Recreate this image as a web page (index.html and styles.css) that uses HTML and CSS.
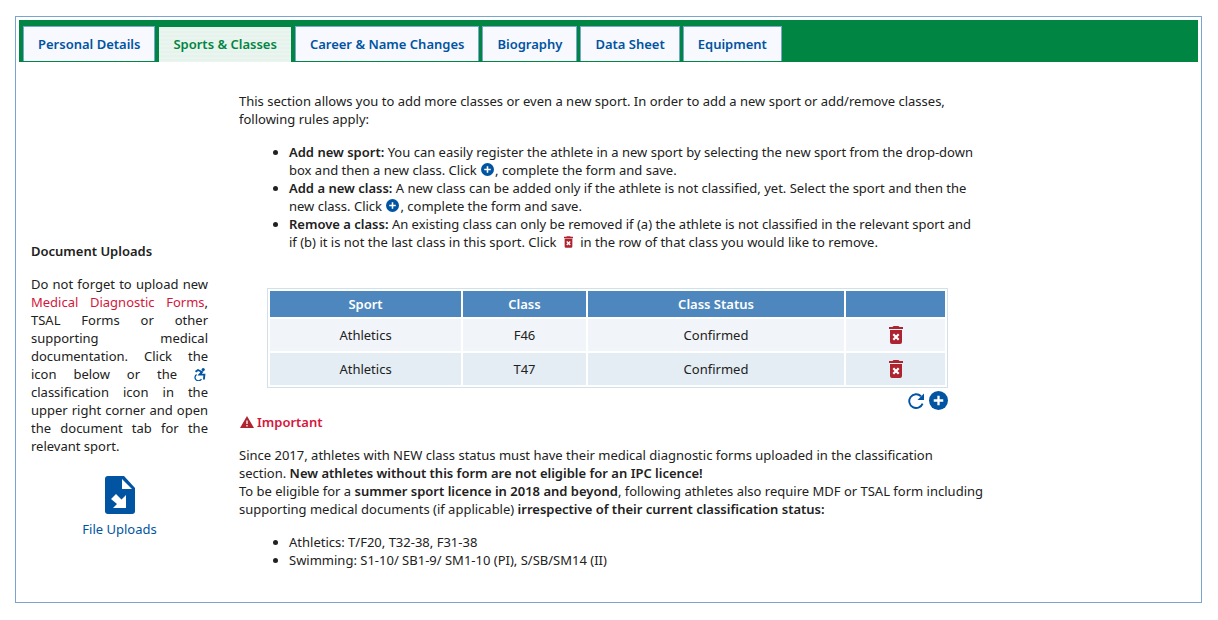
FILE: index.html
```
<!DOCTYPE html>
<html lang="en">
<head>
<meta charset="utf-8">
<title>Sports &amp; Classes</title>
<link rel="stylesheet" href="styles.css">
</head>
<body>
<svg class="sprite" aria-hidden="true">
  <symbol id="plus" viewBox="0 0 20 20"><circle cx="10" cy="10" r="10" fill="#0054a1"/><path d="M10 5v10M5 10h10" stroke="#fff" stroke-width="2.4"/></symbol>
  <symbol id="trash" viewBox="0 0 14 18"><path d="M4.500 0h5l1 1H14v2H0V1h3.500zM1 4h12v12a2 2 0 0 1-2 2H3a2 2 0 0 1-2-2z" fill="#ad2430"/><path d="M4.300 8.300l5.400 5.400M9.700 8.300l-5.400 5.400" stroke="#fff" stroke-width="2.200"/></symbol>
  <symbol id="warn" viewBox="0 0 14 12"><path d="M7 0l7 12H0z" fill="#ad2430"/><path d="M7 4.500v3.500M7 9v1.500" stroke="#fff" stroke-width="1.300"/></symbol>
  <symbol id="reload" viewBox="0 0 16 16"><path d="M14.600 10.600A6.900 6.900 0 1 1 13 3.200" fill="none" stroke="#0054a1" stroke-width="1.900"/><path d="M16 .5v6.500H9.500z" fill="#0054a1"/></symbol>
  <symbol id="chair" viewBox="0 0 12 13"><circle cx="9.200" cy="1.600" r="1.600" fill="#0054a1"/><path d="M1.500 3.800l2.500-1.800L8 4 5.600 6.600h4.800L9.900 11.500" fill="none" stroke="#0054a1" stroke-width="1.900"/><path d="M7.400 3.200L4.600 7h3.800z" fill="#0054a1"/><path d="M2.600 6.500A3.400 3.400 0 1 0 7.400 11" fill="none" stroke="#0054a1" stroke-width="1.300"/></symbol>
  <symbol id="file" viewBox="0 0 30 38"><path d="M3 0h16l11 12v23a3 3 0 0 1-3 3H3a3 3 0 0 1-3-3V3a3 3 0 0 1 3-3z" fill="#0054a1"/><path d="M17 3v10h10zM21 19v13H8l4-4-6-5 5-5 5.500 5.500z" fill="#fff"/></symbol>
</svg>
<div class="panel">
  <nav class="tabs">
    <a class="tab" href="#">Personal Details</a>
    <a class="tab active" href="#" aria-current="page">Sports &amp; Classes</a>
    <a class="tab" href="#">Career &amp; Name Changes</a>
    <a class="tab" href="#">Biography</a>
    <a class="tab" href="#">Data Sheet</a>
    <a class="tab" href="#">Equipment</a>
  </nav>
  <div class="columns">
    <aside class="sidebar">
      <h2 class="side-title">Document Uploads</h2>
      <p class="side-text">Do not forget to upload new <a class="red" href="#">Medical Diagnostic Forms</a>, TSAL Forms or other supporting medical documentation. Click the icon below or the <svg class="icon-chair"><use href="#chair"/></svg> classification icon in the upper right corner and open the document tab for the relevant sport.</p>
      <a class="upload" href="#"><svg class="icon-file"><use href="#file"/></svg>File Uploads</a>
    </aside>
    <main class="content">
      <p>This section allows you to add more classes or even a new sport. In order to add a new sport or add/remove classes, following rules apply:</p>
      <ul>
        <li><b>Add new sport:</b> You can easily register the athlete in a new sport by selecting the new sport from the drop-down box and then a new class. Click <svg class="icon-small"><use href="#plus"/></svg>, complete the form and save.</li>
        <li><b>Add a new class:</b> A new class can be added only if the athlete is not classified, yet. Select the sport and then the new class. Click <svg class="icon-small"><use href="#plus"/></svg>, complete the form and save.</li>
        <li><b>Remove a class:</b> An existing class can only be removed if (a) the athlete is not classified in the relevant sport and if&nbsp;(b) it is not the last class in this sport. Click <svg class="icon-bin"><use href="#trash"/></svg> in the row of that class you would like to remove.</li>
      </ul>
      <div class="grid-area">
        <table class="grid">
          <colgroup><col class="col-sport"><col class="col-class"><col class="col-status"><col class="col-action"></colgroup>
          <thead><tr><th>Sport</th><th>Class</th><th>Class Status</th><th></th></tr></thead>
          <tbody>
            <tr><td>Athletics</td><td>F46</td><td>Confirmed</td><td><button class="icon-button" aria-label="Remove F46"><svg class="icon-trash"><use href="#trash"/></svg></button></td></tr>
            <tr><td>Athletics</td><td>T47</td><td>Confirmed</td><td><button class="icon-button" aria-label="Remove T47"><svg class="icon-trash"><use href="#trash"/></svg></button></td></tr>
          </tbody>
        </table>
        <div class="grid-actions">
          <button class="icon-button" aria-label="Refresh"><svg class="icon-reload"><use href="#reload"/></svg></button>
          <button class="icon-button" aria-label="Add class"><svg class="icon-add"><use href="#plus"/></svg></button>
        </div>
      </div>
      <h2 class="important"><svg class="icon-warn"><use href="#warn"/></svg>Important</h2>
      <p>Since 2017, athletes with NEW class status must have their medical diagnostic forms uploaded in the classification section.&nbsp;<b>New athletes without this form are not eligible for an IPC licence!</b><br>To be eligible for a <b>summer sport licence in 2018 and beyond</b>, following athletes also require MDF or TSAL form including supporting medical documents (if applicable) <b>irrespective of their current classification status:</b></p>
      <ul>
        <li>Athletics: T/F20, T32-38, F31-38</li>
        <li>Swimming: S1-10/ SB1-9/ SM1-10 (PI), S/SB/SM14 (II)</li>
      </ul>
    </main>
  </div>
</div>
</body>
</html>
```
FILE: styles.css
```
* { box-sizing: border-box; }
body { margin: 16px 16px 16px 15px; background: #fff; color: #212121; font: 13px/18px "Noto Sans", sans-serif; }
.sprite { position: absolute; width: 0; height: 0; }
.panel { border: 1px solid #7ba5d1; padding: 3px; }
.tabs { display: flex; gap: 3px; background: #008542; padding: 6px 4px 1px; }
.tab { height: 35px; border: 1px solid #7ba5d1; border-bottom: 0; background: #f8f9ff; color: #0054a1; padding: 0 14px; font-weight: 600; line-height: 35px; text-decoration: none; white-space: nowrap; }
.tab.active { height: 36px; margin-bottom: -1px; border-color: #008542; background: repeating-linear-gradient(#e6f3ec 0 2px, #eaf5ef 2px 4px); color: #008542; }
.columns { display: flex; align-items: flex-start; gap: 31px; padding: 30px 12px 15px; }
.sidebar { flex: none; width: 177px; margin-top: 150px; }
h2 { margin: 0; font-size: 13px; line-height: 18px; font-weight: 600; }
b { font-weight: 600; }
p { margin: 0 0 15px; }
.side-title { margin-bottom: 15px; }
.side-text { margin-bottom: 21px; text-align: justify; }
.red { color: #d3173c; text-decoration: none; }
.upload { display: flex; flex-direction: column; align-items: center; gap: 6px; color: #0054a1; text-decoration: none; }
.content { flex: 0 1 745px; min-width: 0; }
ul { margin: 0 0 15px; padding-left: 50px; }
.grid-area { margin: 37px 36px 0 28px; }
.grid { width: 100%; table-layout: fixed; border: 1px solid #d0e1eb; border-collapse: separate; border-spacing: 2px; text-align: center; }
.grid th { height: 26px; padding: 0; background: #4d87bd; color: #fff; font-weight: 600; }
.grid td { height: 32px; padding: 0 0 1px; background: #f1f5fa; }
.grid tr:nth-child(2) td { background: #e4edf4; }
.col-sport { width: 191px; }
.col-class { width: 123px; }
.col-status { width: 256px; }
.icon-button { display: inline-flex; border: 0; padding: 0; background: none; vertical-align: middle; cursor: pointer; }
.grid-actions { display: flex; justify-content: flex-end; align-items: center; gap: 5px; padding-top: 3px; }
.important { margin: 3px 0 15px; color: #d3173c; }
svg { vertical-align: middle; }
.icon-small { width: 13px; height: 13px; margin: 0 1px; vertical-align: -1px; }
.icon-bin { width: 9px; height: 12px; margin: 0 4px; vertical-align: -1px; }
.icon-trash { width: 14px; height: 18px; }
.icon-reload { width: 16px; height: 16px; }
.icon-add { width: 19px; height: 19px; }
.icon-warn { width: 14px; height: 12px; margin: 0 3px 0 1px; vertical-align: -1px; }
.icon-chair { width: 12px; height: 13px; margin-right: 2px; vertical-align: -2px; }
.icon-file { width: 30px; height: 38px; }
```
